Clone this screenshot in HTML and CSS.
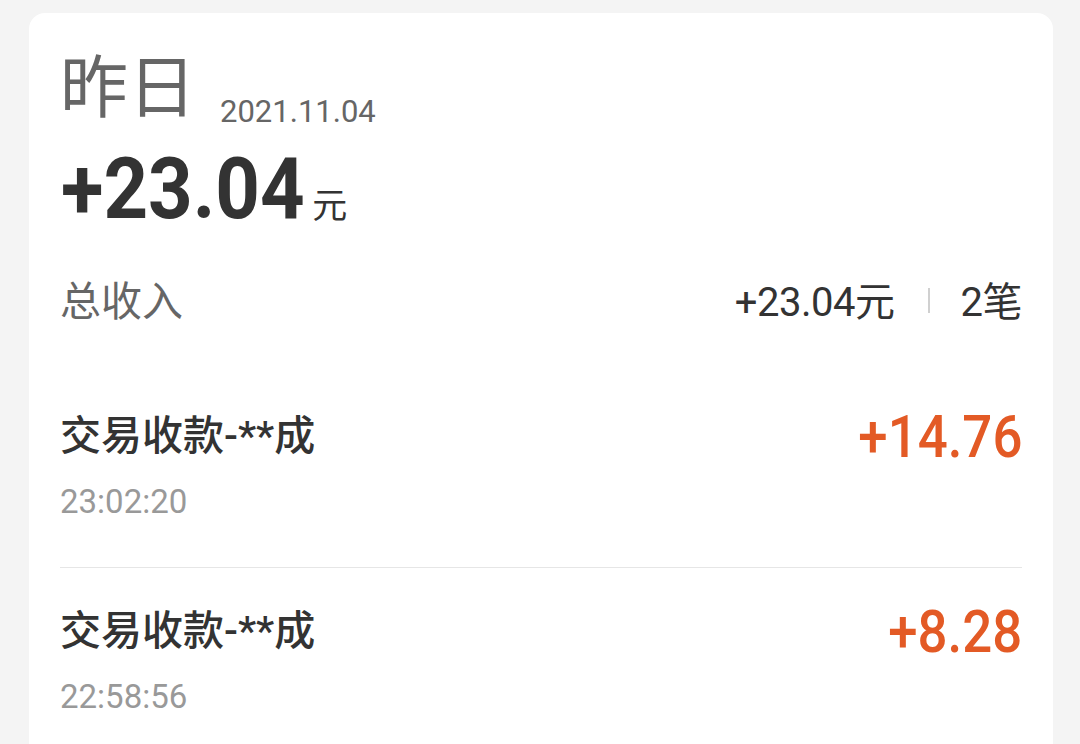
FILE: index.html
```html
<!DOCTYPE html>
<html lang="zh-CN">
<head>
    <meta charset="UTF-8">
    <meta name="viewport" content="width=device-width, initial-scale=1.0">
    <title>收款明细</title>
    <link rel="stylesheet" href="styles.css">
</head>
<body>
    <div class="card">
        <!-- 日期 -->
        <div class="day-head">
            <span class="day-name">昨日</span>
            <span class="day-date">2021.11.04</span>
        </div>

        <!-- 当日合计 -->
        <div class="day-total">
            <span class="total-num">+23.04</span>
            <span class="total-unit">元</span>
        </div>

        <!-- 总收入 -->
        <div class="summary">
            <span class="summary-label">总收入</span>
            <span class="summary-right">+23.04元<span class="summary-sep"></span>2笔</span>
        </div>

        <!-- 交易列表 -->
        <ul class="tx-list">
            <li class="tx">
                <div class="tx-top">
                    <span class="tx-title">交易收款-**成</span>
                    <span class="tx-amount">+14.76</span>
                </div>
                <div class="tx-time">23:02:20</div>
            </li>
            <li class="tx">
                <div class="tx-top">
                    <span class="tx-title">交易收款-**成</span>
                    <span class="tx-amount">+8.28</span>
                </div>
                <div class="tx-time">22:58:56</div>
            </li>
        </ul>
    </div>
</body>
</html>
```

FILE: styles.css
```css
body {
    margin: 0;
    background-color: #f4f4f4;
    font-family: Roboto, "Noto Sans CJK SC", sans-serif;
    padding: 13px 27px 0 29px;
    height: 744px;
    box-sizing: border-box;
    overflow: hidden;
}
.card {
    background-color: #fff;
    border-radius: 16px 16px 0 0;
    padding: 0 31px;
    height: 100%;
}
.day-head {
    display: flex;
    align-items: flex-end;
    height: 68px;
    padding-top: 36px;
}
.day-name {
    font-family: "Noto Sans CJK SC", sans-serif;
    font-size: 68px;
    line-height: 68px;
    color: #666;
}
.day-date {
    font-size: 31px;
    line-height: 31px;
    color: #666;
    margin-left: 24px;
    margin-bottom: -10px;
}
.day-total {
    display: flex;
    align-items: baseline;
    height: 86px;
    margin-top: 29px;
}
.total-num {
    display: inline-block;
    font-size: 86px;
    line-height: 86px;
    font-weight: 700;
    color: #333;
    margin-left: 1px;
    margin-right: -26px;
    transform: scaleX(0.905);
    transform-origin: left;
}
.total-unit {
    font-family: "Noto Sans CJK SC", sans-serif;
    font-size: 35px;
    color: #333;
    margin-left: 8px;
}
.summary {
    display: flex;
    justify-content: space-between;
    align-items: baseline;
    height: 41px;
    margin-top: 46px;
}
.summary-label {
    font-family: "Noto Sans CJK SC", sans-serif;
    font-size: 41px;
    line-height: 41px;
    color: #666;
}
.summary-right {
    font-size: 40px;
    line-height: 41px;
    letter-spacing: -0.5px;
    color: #333;
}
.summary-sep {
    display: inline-block;
    width: 2px;
    height: 25px;
    background-color: #d0d0d0;
    vertical-align: 3px;
    margin: 0 31px 0 33px;
}
.tx-list {
    list-style: none;
    margin: 54px 0 0 0;
    padding: 0;
}
.tx {
    padding-top: 33px;
    height: 161px;
    border-bottom: 1px solid #e6e6e6;
}
.tx:last-child {
    border-bottom: none;
}
.tx-top {
    display: flex;
    justify-content: space-between;
    align-items: flex-start;
    height: 60px;
}
.tx-title {
    font-size: 41px;
    line-height: 60px;
    font-weight: 500;
    color: #333;
}
.tx-amount {
    display: inline-block;
    font-size: 60px;
    line-height: 60px;
    font-weight: 500;
    color: #e35a25;
    margin-top: 1px;
    transform: scaleX(0.88);
    transform-origin: right;
}
.tx-time {
    font-size: 33px;
    line-height: 33px;
    color: #999;
    margin-top: 19px;
}
```
